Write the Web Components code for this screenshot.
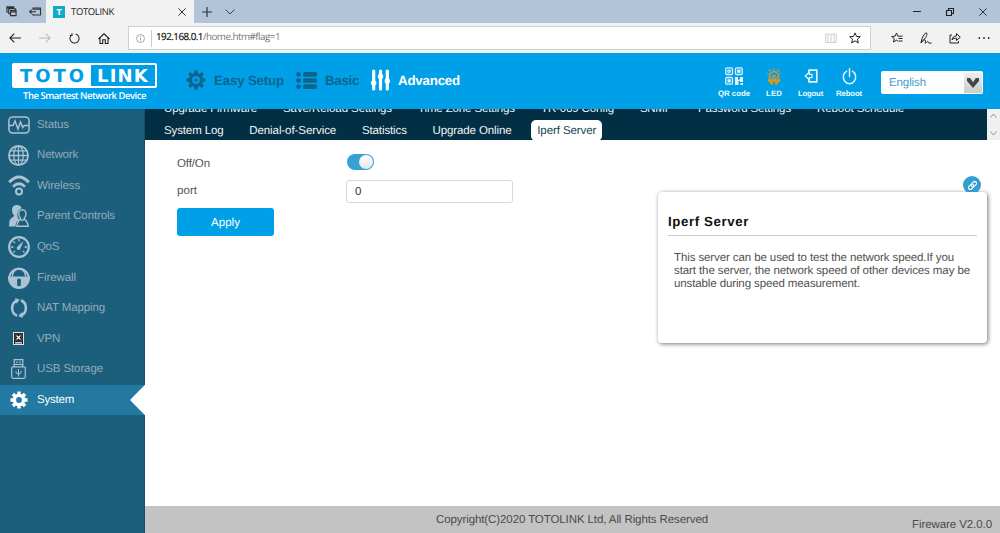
<!DOCTYPE html>
<html lang="en">
<head>
<meta charset="utf-8">
<title>TOTOLINK</title>
<style>
html,body{margin:0;height:100%;overflow:hidden;background:#fff}
body{font-family:"Liberation Sans",Arial,sans-serif}
</style>
</head>
<body>
<router-page></router-page>
<script>
const ICONS = {
  tabs: ['0 0 12 12', '<g fill="none" stroke="#333" stroke-width="1.2"><path d="M3 6.5H1V1h7.5v1.500M1 2h7M5 8.500H3V3h7.500v1.500"/><path d="M5 5h6v5.500H5zM5 6.500h6"/></g>'],
  aside: ['0 0 12 10', '<g fill="none" stroke="#333" stroke-width="1.100"><path d="M4 3V1h7.500v8H4V7.500M4 2.500h7.500M0.500 5.200H7M2.700 3L.6 5.200l2.100 2.200"/></g>'],
  close: ['0 0 8 8', '<path d="M.4.400l7.200 7.200M7.600.400L.4 7.600" stroke="#333" stroke-width="1"/>'],
  plus: ['0 0 10 10', '<path d="M5 0v10M0 5h10" stroke="#333" stroke-width="1.200"/>'],
  chev: ['0 0 10 6', '<path d="M.5.500L5 5 9.500.500" fill="none" stroke="#444" stroke-width="1"/>'],
  min: ['0 0 8 8', '<path d="M0 3.500h8" stroke="#222" stroke-width="1"/>'],
  restore: ['0 0 8 8', '<path d="M.5 2.500h5v5h-5zM2.500 2.500v-2h5v5h-2" fill="none" stroke="#222" stroke-width="1.100"/>'],
  back: ['0 0 12 10', '<path d="M12 5H1M5.300.600L.9 5l4.400 4.400" fill="none" stroke="#222" stroke-width="1.100"/>'],
  fwd: ['0 0 12 10', '<path d="M0 5h11M6.700.600L11.100 5l-4.400 4.400" fill="none" stroke="#bbb" stroke-width="1.100"/>'],
  reload: ['0 0 12 12', '<path d="M7.300 1.200A5 5 0 1 1 3 2M3.300.200V2.700H.9" fill="none" stroke="#222" stroke-width="1.100"/>'],
  home: ['0 0 12 11', '<path d="M.5 6L6 .800 11.500 6M2 4.800v5.700h2.700V6.800h2.600v3.700H10V4.800" fill="none" stroke="#222" stroke-width="1.100"/>'],
  info: ['0 0 10 10', '<circle cx="5" cy="5" r="4.400" fill="none" stroke="#888" stroke-width=".8"/><path d="M5 4.400v3M5 2.400v1" stroke="#888" stroke-width=".9"/>'],
  book: ['0 0 12 11', '<path d="M6 1.500v8M.7 1h4.500L6 1.600 6.800 1h4.500v8.500H6.800L6 10l-.8-.500H.7zM3 1v8M9 1v8" fill="none" stroke="#c8c8c8" stroke-width=".9"/>'],
  star: ['0 0 12 12', '<path d="M6 .900l1.500 3.500 3.800.300-2.900 2.500.9 3.700L6 8.900l-3.300 2 .9-3.700L.7 4.700l3.800-.300z" fill="none" stroke="#222" stroke-width="1"/>'],
  hub: ['0 0 12 12', '<path d="M7.500 9.300L5.500 8.200l-3 1.800.8-3.300L.7 4.500l3.400-.300L5.500 1l1.400 3.200H11.500M7.500 6.500h4M8 9h3.500" fill="none" stroke="#222" stroke-width="1"/>'],
  pen: ['0 0 12 12', '<path d="M1 11L2 6.500Q4 1.500 6 .800c1.600 0 .8 2.700-.3 4.700L1 11c1-2 3.500-4 4.400-2.800.7 1.300-1 3-.2 3.100 1.100 0 1.600-2 2.700-1.800.8.200.2 1.600 1.200 1.600h2.500" fill="none" stroke="#222" stroke-width="1"/>'],
  share: ['0 0 12 12', '<path d="M3 3H1v8h8.500V9M3 8C3.500 5 5 4 7.500 4V1.500l3.800 3.700L7.500 8.500V6.200C5.500 6.100 4 6.500 3 8z" fill="none" stroke="#222" stroke-width="1"/>'],
  dots: ['0 0 12 4', '<g fill="#222"><circle cx="1.300" cy="2" r=".9"/><circle cx="6" cy="2" r=".9"/><circle cx="10.700" cy="2" r=".9"/></g>'],
  gear: ['0 0 20 20', '<g fill="currentColor" fill-rule="evenodd"><path d="M10 3a7 7 0 1 0 0 14a7 7 0 1 0 0-14zM10 6.100a3.900 3.900 0 1 1 0 7.800a3.900 3.900 0 1 1 0-7.800z"/><circle cx="10" cy="10" r="1.600"/></g><g stroke="currentColor" stroke-width="3.800" stroke-linecap="round"><path d="M10 2v1.500M10 16.500V18M2 10h1.500M16.500 10H18M4.340 4.340l1 1M14.700 14.700l1 1M4.340 15.700l1-1M14.700 5.300l1-1"/></g>'],
  cog: ['0 0 20 20', '<path fill="currentColor" fill-rule="evenodd" d="M10 3a7 7 0 1 0 0 14a7 7 0 1 0 0-14zM10 6.800a3.200 3.200 0 1 1 0 6.400a3.200 3.200 0 1 1 0-6.400z"/><path stroke="currentColor" stroke-width="3.800" d="M10 .500V5M10 15v4.500M.5 10H5M15 10h4.500M3.300 3.300l3 3M13.700 13.700l3 3M3.300 16.700l3-3M13.700 6.300l3-3"/>'],
  list: ['0 0 21 17', '<g fill="currentColor"><circle cx="2.500" cy="2.400" r="2.400"/><circle cx="2.500" cy="8.500" r="2.400"/><circle cx="2.500" cy="14.600" r="2.400"/><rect x="7" y="0" width="14" height="4.700" rx="1.500"/><rect x="7" y="6.150" width="14" height="4.700" rx="1.500"/><rect x="7" y="12.300" width="14" height="4.700" rx="1.500"/></g>'],
  sliders: ['0 0 19 22', '<g stroke="#fff" stroke-width="3.200" stroke-linecap="round"><path d="M2.700 2v18M9.500 2v18M16.300 2v18"/></g><g fill="#fff"><circle cx="2.700" cy="14" r="2.700"/><circle cx="9.500" cy="7.500" r="2.700"/><circle cx="16.300" cy="12" r="2.700"/></g>'],
  qr: ['0 0 18 18', '<g fill="none" stroke="#d8f1fd" stroke-width="1.300"><rect x=".8" y=".8" width="6.700" height="6.700" rx="1"/><rect x="10.500" y=".8" width="6.700" height="6.700" rx="1"/><rect x=".8" y="10.500" width="6.700" height="6.700" rx="1"/><circle cx="4.100" cy="4.100" r="1.300"/></g><g fill="#e4f5fd"><rect x="12.200" y="2.500" width="3.300" height="3.300"/><rect x="2.500" y="12.200" width="3.300" height="3.300"/><path d="M10 10h3v2.500h2V10h3v5h-3v-1h-1.500v4H10zM15.500 16H18v2h-2.500z"/></g>'],
  led: ['0 0 14 18', '<g fill="none" stroke="#c99a35"><path d="M7 0v3M2 1.500l1.500 2M12 1.500l-1.500 2M0 5.500l1.500.700M14 5.500l-1.500.700" stroke-width="1.200"/><path d="M2.500 13V8.500a4.500 4.500 0 0 1 9 0V13" stroke-width="1.700"/><path d="M5 12.500v-3a2 2 0 0 1 4 0v3M6 9.500h2M4 12h6M7 8v4" stroke-width="1"/></g><path d="M.8 12.300h12.400v2.500H.8zM3 14h3v3.500H3zM8 14h3v3.500H8z" fill="#d79a1e"/>'],
  logout: ['0 0 14 14', '<path d="M5 4V1.100h7.800v11.800H5V10" fill="none" stroke="#e4f5fd" stroke-width="1.700"/><path d="M5.300 3.200L1.200 7l4.100 3.800V8.600H8V5.400H5.300z" fill="none" stroke="#e4f5fd" stroke-width="1.200"/>'],
  power: ['0 0 16 17', '<path d="M5 3.200a6.600 6.600 0 1 0 6 0M8 .500v8" fill="none" stroke="#e4f5fd" stroke-width="1.500" stroke-linecap="round"/>'],
  select: ['0 0 12 10', '<path d="M0 0h3.200L6 4.200 8.800 0H12v3L6 10 0 3z" fill="#41464b"/>'],
  status: ['0 0 22 18', '<rect x=".9" y=".9" width="20.200" height="16.200" rx="3.800" fill="none" stroke="currentColor" stroke-width="1.500"/><path d="M1 9.500h4l2-4.500 3 8 2.500-7 2.200 5.500 1.600-2H21" fill="none" stroke="currentColor" stroke-width="1.500"/>'],
  globe: ['0 0 20 20', '<g fill="none" stroke="currentColor" stroke-width="1.200"><circle cx="10" cy="10" r="9.100" stroke-width="1.700"/><ellipse cx="10" cy="10" rx="4.500" ry="9"/><path d="M10 1v18M1 10h18M2.500 5.500h15M2.500 14.500h15"/></g>'],
  wifi: ['0 0 22 21', '<g fill="none" stroke="currentColor"><path d="M1.200 7.300Q11-3.200 20.800 7.300" stroke-width="3"/><path d="M5 11.700Q11 5.800 17 11.700" stroke-width="2.700"/><circle cx="11" cy="16.500" r="3" stroke-width="2"/></g>'],
  people: ['0 0 21 22', '<path d="M8.500 0C4.500 0 2.800 2.500 3.300 6c.3 2.500 1.200 3.800 2 4.500-.2 2-4.300 2.200-4.900 6L0 21.500h7c0-4 1.500-5.500 3.500-6.500C8 11 8 5 13.300 3.300 12.500 1.100 10.800 0 8.500 0z" fill="currentColor"/><path d="M14 4.800c-2.800 0-4 2-3.700 4.700.3 2 1.100 3.100 1.900 3.800-.3 2.200-4 2-4 7.900h11.900c0-5.900-3.900-5.700-4.200-7.900.9-.700 1.700-1.800 1.900-3.800.2-2.700-1-4.700-3.800-4.700zM12 14.500q2 1.500 4 0" fill="none" stroke="currentColor" stroke-width="1.500"/>'],
  gauge: ['0 0 22 22', '<circle cx="11" cy="11" r="9.800" fill="none" stroke="currentColor" stroke-width="2.200"/><path d="M11 3v2.500M5.300 5.300L7 7M3 11h2.500M16.500 11H19M5.500 16.500L7 15M16.500 16.500L15 15" stroke="currentColor" stroke-width="1.300"/><path d="M15.500 5L9.600 10.500a1.900 1.900 0 1 0 2.900 1.800z" fill="currentColor"/>'],
  lock: ['0 0 22 22', '<path d="M4.500 9.500V8.500a6.500 6.500 0 0 1 13 0v1" fill="none" stroke="currentColor" stroke-width="1.500"/><path fill="currentColor" fill-rule="evenodd" d="M0 9.500h22v1.500a11 11 0 0 1-22 0zM11 11.500a2 2 0 0 0-1.800 3V19h3.600v-4.500a2 2 0 0 0-1.800-3z"/><path d="M1.200 10A9.900 9.900 0 0 1 20.800 10" fill="none" stroke="currentColor" stroke-width="2"/>'],
  cycle: ['0 0 20 20', '<g fill="none" stroke="currentColor" stroke-width="2.800"><path d="M7.800 17.600A7.900 7.900 0 0 1 7 2.900"/><path d="M12.200 2.400A7.900 7.900 0 0 1 13 17.100"/></g><path d="M5.500 0L10.800 1.800 7.200 5.800zM14.500 20L9.200 18.200 12.800 14.200z" fill="currentColor"/>'],
  vpn: ['0 0 11 13', '<rect x=".5" y=".5" width="10" height="12" fill="#111" stroke="#dce4e8"/><path d="M2 10.800h7M3.500 3.500l4 4M7.500 3.500l-4 4" stroke="#fff" stroke-width="1.200"/><path d="M2 2h7v7H2z" fill="none" stroke="#888" stroke-width=".6"/>'],
  usb: ['0 0 15 20', '<g fill="none" stroke="currentColor" stroke-width="1.200"><path d="M3.200 8V.700h8.600V8M3.200 5.500h8.600M6 2.200v2M9 2.200v2"/><rect x=".7" y="7.800" width="13.600" height="11.500" rx="1.500"/><path d="M7.500 10v7.500M5 12v1.700l2.500 1.500L10 13.700V12" stroke-width="1"/></g>'],
  link: ['0 0 10 10', '<g fill="none" stroke="#fff" stroke-width="1.200" transform="rotate(-45 5 5)"><rect x="-.5" y="3" width="6.800" height="4" rx="2"/><rect x="3.700" y="3" width="6.800" height="4" rx="2"/></g>'],
  sup: ['0 0 8 5', '<path d="M.5 4.500L4 1l3.500 3.500" fill="none" stroke="#888"/>'],
  sdown: ['0 0 8 5', '<path d="M.5.500L4 4 7.500.500" fill="none" stroke="#888"/>']
};

class UiIcon extends HTMLElement {
  connectedCallback() {
    const [box, body] = ICONS[this.getAttribute('name')];
    const w = this.getAttribute('w'), h = this.getAttribute('h');
    this.attachShadow({mode: 'open'}).innerHTML =
      `<style>:host{display:block;flex:none;width:${w}px;height:${h}px}svg{display:block;overflow:visible}</style>
       <svg width="${w}" height="${h}" viewBox="${box}" preserveAspectRatio="none">${body}</svg>`;
  }
}
customElements.define('ui-icon', UiIcon);

/* One line of text, tracked so that it fills the width in its w attribute. */
class UiText extends HTMLElement {
  connectedCallback() {
    const root = this.attachShadow({mode: 'open'});
    const w = +this.getAttribute('w');
    root.innerHTML = `<style>:host{display:block;flex:none;width:${w}px;white-space:nowrap;text-rendering:geometricPrecision}span{display:inline-block}</style><span><slot></slot></span>`;
    const span = root.querySelector('span');
    const n = this.textContent.length;
    span.style.letterSpacing = ((w - span.getBoundingClientRect().width) / n).toFixed(3) + 'px';
  }
}
customElements.define('ui-text', UiText);

const define = (tag, css, html) => customElements.define(tag, class extends HTMLElement {
  connectedCallback() {
    this.attachShadow({mode: 'open'}).innerHTML = `<style>*{box-sizing:border-box}${css}</style>${html}`;
  }
});

define('browser-tabs', `
  :host{display:flex;height:23px;background:#b1c4d9;align-items:center;font:9.500px/23px "Open Sans","Noto Sans",sans-serif;color:#222}
  .left{display:flex;width:46px;padding-left:6px;gap:12px;align-items:center}
  .tab{display:flex;align-items:center;width:148px;height:23px;background:#f2f2f2;padding:0 8px 0 7px}
  .fav{width:12px;height:12px;background:#12aac4;color:#fff;font:bold 9px/12px "Open Sans",sans-serif;text-align:center;margin-right:6px}
  .x{margin-left:auto}.plus{margin-left:8px}.chev{margin-left:13px}
  .win{margin-left:auto;display:flex;gap:25px;padding-right:13px;align-items:center}`,
  `<div class="left"><ui-icon name="tabs" w="11" h="11"></ui-icon><ui-icon name="aside" w="12" h="9"></ui-icon></div>
   <div class="tab"><div class="fav">T</div><ui-text w="43">TOTOLINK</ui-text><ui-icon class="x" name="close" w="8" h="8"></ui-icon></div>
   <ui-icon class="plus" name="plus" w="10" h="10"></ui-icon><ui-icon class="chev" name="chev" w="10" h="6"></ui-icon>
   <div class="win"><ui-icon name="min" w="8" h="8"></ui-icon><ui-icon name="restore" w="8" h="8"></ui-icon><ui-icon name="close" w="8" h="8"></ui-icon></div>`);

define('browser-bar', `
  :host{display:flex;height:30px;background:#f2f2f2;align-items:center;padding-left:9px;font:9.800px/20px "Open Sans","Noto Sans",sans-serif;color:#777}
  .nav{display:flex;gap:18px;align-items:center;width:119px}
  .url{display:flex;align-items:center;width:743px;height:24px;border:1px solid #d0d0d0;background:#fff;padding:0 9px 0 7px}
  .url ui-text{margin-top:-3px}
  .sep{width:1px;height:17px;background:#ccc;margin:0 4px 0 6px}
  b{font-weight:400;color:#111;-webkit-text-stroke:.2px #111}
  .book{margin-left:auto;margin-right:12px}
  .tools{display:flex;align-items:center;gap:17px;margin-left:20px}`,
  `<div class="nav"><ui-icon name="back" w="12" h="10"></ui-icon><ui-icon name="fwd" w="12" h="10"></ui-icon><ui-icon name="reload" w="11" h="11"></ui-icon><ui-icon name="home" w="12" h="11"></ui-icon></div>
   <div class="url"><ui-icon name="info" w="9" h="9"></ui-icon><div class="sep"></div><ui-text w="124"><b>192.168.0.1</b>/home.htm#flag=1</ui-text>
   <ui-icon class="book" name="book" w="12" h="11"></ui-icon><ui-icon name="star" w="12" h="12"></ui-icon></div>
   <div class="tools"><ui-icon name="hub" w="12" h="12"></ui-icon><ui-icon name="pen" w="12" h="12"></ui-icon><ui-icon name="share" w="12" h="12"></ui-icon><ui-icon name="dots" w="12" h="4"></ui-icon></div>`);

define('totolink-logo', `
  :host{display:block;width:145px}
  .box{display:flex;height:25px;background:#fff;border-radius:2px;padding:2px;font:bold 18px/23px "DejaVu Sans","Liberation Sans",sans-serif;align-items:stretch}
  .a{width:77px;height:21px;color:#009ee7;padding-left:6px}.b{flex:1;height:21px;background:#009ee7;color:#fff;padding-left:6px}
  .tag{font:600 9.500px/13px "Open Sans",sans-serif;color:#fff;padding-left:11px;margin-top:1px}`,
  `<div class="box"><div class="a"><ui-text w="67">TOTO</ui-text></div><div class="b"><ui-text w="52">LINK</ui-text></div></div><div class="tag"><ui-text w="123">The Smartest Network Device</ui-text></div>`);

define('quick-action', `
  :host{display:flex;flex-direction:column;align-items:center;justify-content:space-between;height:33px;color:#eff9fe;font:bold 7.800px/10px "Liberation Sans",Arial,sans-serif}
  .i{height:20px;display:flex;align-items:center}`,
  `<div class="i"><slot name="icon"></slot></div><slot></slot>`);

define('language-select', `
  :host{display:flex;width:102px;height:23px;background:#fff;border-radius:2px;color:#459cc9;font:11.500px/25px "Liberation Sans",Arial,sans-serif;padding-left:8px;justify-content:space-between}
  .b{width:18px;margin:2px 1px 1px 0;background:linear-gradient(#eee,#ccc);display:flex;align-items:center;justify-content:center}`,
  `<ui-text w="37">English</ui-text><div class="b"><ui-icon name="select" w="12" h="10"></ui-icon></div>`);

define('app-header', `
  :host{display:flex;height:56px;background:#00a0e8;color:#0d658f;padding-left:12px;font:bold 13.300px/20px "Liberation Sans",Arial,sans-serif;position:relative;z-index:1}
  totolink-logo{margin-top:10px;margin-right:29px}
  nav{display:grid;grid-template-columns:110px 75px 90px;height:54px;align-items:center}
  nav div{display:flex;align-items:center;gap:8px}.on{color:#fff}
  nav ui-text{padding-top:1px}
  .acts{display:flex;gap:9px;margin:13px 0 0 auto}
  .acts quick-action{flex:none}
  language-select{margin:18px 17px 0 19px}`,
  `<totolink-logo></totolink-logo>
   <nav><div><ui-icon name="gear" w="20" h="20"></ui-icon><ui-text w="70">Easy Setup</ui-text></div>
   <div><ui-icon name="list" w="21" h="17"></ui-icon><ui-text w="34">Basic</ui-text></div>
   <div class="on"><ui-icon name="sliders" w="19" h="22"></ui-icon><ui-text w="62">Advanced</ui-text></div></nav>
   <div class="acts">
   <quick-action><ui-icon slot="icon" name="qr" w="18" h="18"></ui-icon><ui-text w="32">QR code</ui-text></quick-action>
   <quick-action style="margin-left:7px"><ui-icon slot="icon" name="led" w="14" h="17"></ui-icon><ui-text w="16">LED</ui-text></quick-action>
   <quick-action style="margin-left:7px"><ui-icon slot="icon" name="logout" w="14" h="14"></ui-icon><ui-text w="25">Logout</ui-text></quick-action>
   <quick-action style="margin-left:4px"><ui-icon slot="icon" name="power" w="15" h="17"></ui-icon><ui-text w="26">Reboot</ui-text></quick-action></div>
   <language-select></language-select>`);

define('side-item', `
  :host{display:flex;align-items:center;height:30.600px;color:#93abb8;font:11.500px/30px "Liberation Sans",Arial,sans-serif}
  .i{width:37px;display:flex;justify-content:center;color:#abc3d3}
  :host([active]){background:#2379a1;color:#fff}:host([active]) .i{color:#fff}
  .arrow{display:none;width:15px;height:30.600px;background:#fff;clip-path:polygon(100% 0,100% 100%,0 50%);margin-left:auto}
  :host([active]) .arrow{display:block}`,
  `<div class="i"><slot name="icon"></slot></div><slot></slot><div class="arrow"></div>`);

const SIDE = [['status',22,18,'Status',32],['globe',21,21,'Network',41],['wifi',22,21,'Wireless',43],['people',20,22,'Parent Controls',78],['gauge',22,22,'QoS',22],['lock',22,22,'Firewall',39],['cycle',18,20,'NAT Mapping',68],['vpn',11,13,'VPN',23],['usb',15,20,'USB Storage',66],['cog',18,18,'System',37]];
define('side-menu', `:host{display:block;width:145px;background:#1c5f7d;box-shadow:inset -1px 0 #184f69;padding-top:.4px;box-sizing:border-box}`,
  SIDE.map(([n,w,h,t,tw]) => `<side-item${n==='cog'?' active':''}><ui-icon slot="icon" name="${n}" w="${w}" h="${h}"></ui-icon><ui-text w="${tw}">${t}</ui-text></side-item>`).join(''));

define('sub-nav', `
  :host{display:flex;height:31px;overflow:hidden;background:#022f43;color:#f2f5f7;font:11.500px/21px "Liberation Sans",Arial,sans-serif}
  .rows{margin-top:-10px;flex:1;padding-left:19px}
  .row{display:flex;gap:26px;height:20.500px;white-space:nowrap}
  .row + .row{gap:25.700px;line-height:22px}
  .on{background:#fff;color:#173f53;border-radius:5px;padding:0 6px;margin:0 -6px;height:21px}
  .bar{width:13px;background:#f0f0f0;display:flex;flex-direction:column;align-items:center;justify-content:space-between;padding:4px 0 4px}`,
  `<div class="rows"><div class="row"><ui-text w="93">Upgrade Firmware</ui-text><ui-text w="109">Save/Reload Settings</ui-text><ui-text w="97">Time Zone Settings</ui-text><ui-text w="73">TR-069 Config</ui-text><ui-text w="32">SNMP</ui-text><ui-text w="93">Password Settings</ui-text><ui-text w="87">Reboot Schedule</ui-text></div>
   <div class="row"><ui-text w="59.500">System Log</ui-text><ui-text w="87">Denial-of-Service</ui-text><ui-text w="45">Statistics</ui-text><ui-text w="79">Upgrade Online</ui-text><div class="on"><ui-text w="59">Iperf Server</ui-text></div></div></div>
   <div class="bar"><ui-icon name="sup" w="7" h="5"></ui-icon><ui-icon name="sdown" w="7" h="5"></ui-icon></div>`);

define('toggle-switch', `
  :host{display:flex;justify-content:flex-end;width:27px;height:16px;border-radius:8px;background:#35a2d3;padding:1px;box-sizing:border-box}
  i{width:14px;height:14px;border-radius:50%;background:linear-gradient(#fff,#e2e5ea)}`, `<i></i>`);

define('server-form', `
  :host{display:grid;grid-template-columns:169px 168px;grid-template-rows:16px 33px 28px;row-gap:0;width:337px;margin:14px 0 0 32px;align-items:end;color:#555;font:11.500px/16px "Liberation Sans",Arial,sans-serif;align-content:start}
  toggle-switch{margin-left:1px}
  .in{width:167px;height:23px;border:1px solid #d8d8d8;border-radius:3px;padding-left:8px;line-height:21px;color:#333}
  button{width:97px;height:28px;border:0;border-radius:3px;background:#00a0e8;color:#fff;font:inherit;padding:1px 0 0 34px;text-align:left;margin-top:5px}
  .lab{padding-top:3px;align-self:center}.port{padding-bottom:4px}`,
  `<div class="lab"><ui-text w="33">Off/On</ui-text></div><toggle-switch></toggle-switch><div class="port"><ui-text w="20">port</ui-text></div><div class="in">0</div><button style="align-self:start"><ui-text w="29">Apply</ui-text></button>`);

define('help-card', `
  :host{display:block;width:329px;height:151px;margin-top:52px;background:#fff;border-radius:4px;box-shadow:1px 1px 4px rgba(0,0,0,.55);padding:20px 10px 0;position:relative;color:#505050;font:11.500px/13.200px "Liberation Sans",Arial,sans-serif;box-sizing:border-box}
  .title{font:bold 13.300px/20px "Liberation Sans",Arial,sans-serif;color:#111;padding-bottom:3px;border-bottom:1px solid #ccc;margin-bottom:16px}
  .text{padding-left:6px}
  .clip{position:absolute;top:-17px;right:3px;width:24px;height:17px;overflow:hidden}
  .badge{width:18px;height:18px;border-radius:50%;background:#319fd0;display:flex;align-items:center;justify-content:center;margin:1px 0 0 3px}`,
  `<div class="clip"><div class="badge"><ui-icon name="link" w="9" h="9"></ui-icon></div></div>
   <div class="title"><ui-text w="81">Iperf Server</ui-text></div>
   <div class="text"><ui-text w="280">This server can be used to test the network speed.If you</ui-text><ui-text w="296">start the server, the network speed of other devices may be</ui-text><ui-text w="186">unstable during speed measurement.</ui-text></div>`);

define('page-footer', `
  :host{display:flex;justify-content:space-between;height:27px;background:#c3c3c3;color:#4b4b4b;font:11.500px/28px "Liberation Sans",Arial,sans-serif;padding:0 8px 0 291px}
  .v{padding-top:5px}`,
  `<ui-text w="272">Copyright(C)2020 TOTOLINK Ltd, All Rights Reserved</ui-text><ui-text class="v" w="80">Fireware V2.0.0</ui-text>`);

define('router-page', `
  :host{display:flex;flex-direction:column;width:1000px;height:533px;overflow:hidden}
  .main{display:flex;flex:1;min-height:0}
  .body{flex:1;display:flex;flex-direction:column;min-width:0}
  .content{flex:1;display:flex;justify-content:space-between;padding-right:13px}`,
  `<browser-tabs></browser-tabs><browser-bar></browser-bar><app-header></app-header>
   <div class="main"><side-menu></side-menu><div class="body"><sub-nav></sub-nav><div class="content"><server-form></server-form><help-card></help-card></div><page-footer></page-footer></div></div>`);
</script>
</body>
</html>
